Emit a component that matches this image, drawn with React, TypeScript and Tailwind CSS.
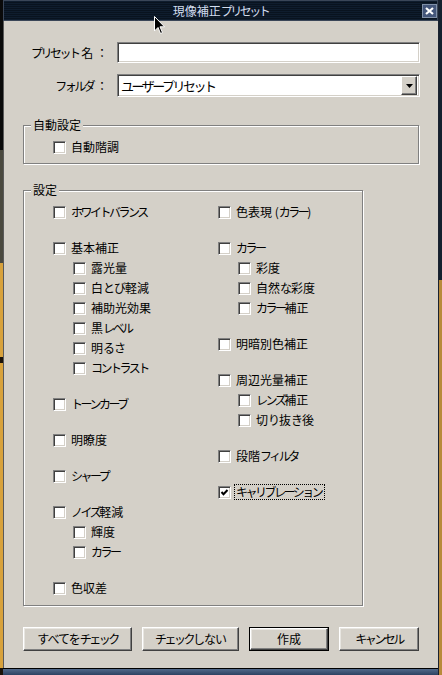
import type { ReactNode } from 'react';

type Row = { t: string; sub?: boolean; checked?: boolean; focus?: boolean };

const leftGroups: Row[][] = [
  [{ t: 'ホワイトバランス' }],
  [
    { t: '基本補正' },
    { t: '露光量', sub: true },
    { t: '白とび軽減', sub: true },
    { t: '補助光効果', sub: true },
    { t: '黒レベル', sub: true },
    { t: '明るさ', sub: true },
    { t: 'コントラスト', sub: true },
  ],
  [{ t: 'トーンカーブ' }],
  [{ t: '明瞭度' }],
  [{ t: 'シャープ' }],
  [{ t: 'ノイズ軽減' }, { t: '輝度', sub: true }, { t: 'カラー', sub: true }],
  [{ t: '色収差' }],
];

const rightGroups: Row[][] = [
  [{ t: '色表現 (カラー)' }],
  [
    { t: 'カラー' },
    { t: '彩度', sub: true },
    { t: '自然な彩度', sub: true },
    { t: 'カラー補正', sub: true },
  ],
  [{ t: '明暗別色補正' }],
  [{ t: '周辺光量補正' }, { t: 'レンズ補正', sub: true }, { t: '切り抜き後', sub: true }],
  [{ t: '段階フィルタ' }],
  [{ t: 'キャリブレーション', checked: true, focus: true }],
];

// the source UI font sets kana proportionally; narrow the kana runs to match
function Jp({ text }: { text: string }) {
  const runs = text.match(/[\u30a0-\u30ff]+|[\u3040-\u309f]+|[^\u3040-\u30ff]+/g) ?? [];
  return (
    <>
      {runs.map((r, i) => {
        if (/^[\u30a0-\u30ff]/.test(r)) {
          return (
            <span key={i} className="tracking-[-2.5px]">
              {r}
            </span>
          );
        }
        if (/^[\u3040-\u309f]/.test(r)) {
          return (
            <span key={i} className="tracking-[-1px]">
              {r}
            </span>
          );
        }
        return <span key={i}>{r}</span>;
      })}
    </>
  );
}

function CheckBox({ checked }: { checked?: boolean }) {
  return (
    <span className="flex h-[13px] w-[13px] shrink-0 items-center justify-center border border-t-[#808080] border-l-[#808080] border-r-white border-b-white bg-white shadow-[inset_1px_1px_0_#404040,inset_-1px_-1px_0_#d4d0c8]">
      {checked && (
        <svg width="9" height="9" viewBox="0 0 9 9">
          <polyline points="1.5,4 3.5,6.2 7.5,2" fill="none" stroke="#000" strokeWidth="2" />
        </svg>
      )}
    </span>
  );
}

function Item({ row }: { row: Row }) {
  return (
    <div className={`flex h-[20px] items-center gap-[5px] ${row.sub ? 'pl-[20px]' : ''}`}>
      <CheckBox checked={row.checked} />
      <span className={`leading-[14px] ${row.focus ? 'outline outline-1 outline-dotted outline-black pl-[1px] pr-[3px] -ml-[1px]' : ''}`}>
        <Jp text={row.t} />
      </span>
    </div>
  );
}

function Column({ groups, className }: { groups: Row[][]; className: string }) {
  return (
    <div className={`flex flex-col gap-[16px] ${className}`}>
      {groups.map((g, i) => (
        <div key={i} className="flex flex-col">
          {g.map((r) => (
            <Item key={r.t} row={r} />
          ))}
        </div>
      ))}
    </div>
  );
}

function GroupBox({ title, className, children }: { title: string; className: string; children: ReactNode }) {
  return (
    <div
      className={`relative border border-[#808080] shadow-[inset_1px_1px_0_#fff,1px_1px_0_#fff] ${className}`}
    >
      <span className="absolute -top-[9px] left-[7px] bg-[#d4d0c8] px-[2px] leading-[16px]">{title}</span>
      {children}
    </div>
  );
}

function Button({ children, className, primary }: { children: string; className: string; primary?: boolean }) {
  return (
    <div className={`${primary ? 'border border-black' : ''} ${className}`}>
      <div className="flex h-full items-center justify-center border border-t-white border-l-white border-r-[#404040] border-b-[#404040] bg-[#d4d0c8] shadow-[inset_-1px_-1px_0_#808080,inset_1px_1px_0_#e8e6e1]">
        <span>
          <Jp text={children} />
        </span>
      </div>
    </div>
  );
}

export default function App() {
  return (
    <div className="relative flex h-[675px] w-[442px] overflow-hidden bg-black text-[12px] text-black font-['Noto_Sans_CJK_JP','Noto_Sans',sans-serif]">
      {/* desktop behind, left edge */}
      <div className="flex w-[3px] flex-col">
        <div className="h-[150px] bg-[#0a0a0a]" />
        <div className="h-[113px] bg-[#4a493f]" />
        <div className="h-[94px] bg-[#d8a23c]" />
        <div className="h-[6px] bg-[#1a1208]" />
        <div className="flex-1 bg-[#d8a23c]" />
        <div className="h-[7px] bg-[#1a1208]" />
      </div>

      <div className="flex w-[435px] flex-col">
        {/* title bar */}
        <div className="relative flex h-[21px] items-center justify-center border border-[#3a4658] bg-[repeating-linear-gradient(180deg,#0f1d2e_0px,#0f1d2e_1px,#09131f_1px,#09131f_2px)]">
          <span className="text-[12px] leading-[14px] text-[#d2dcee]">
            <Jp text="現像補正プリセット" />
          </span>
          <div className="absolute right-[0px] top-[3px] flex h-[14px] w-[15px] items-center justify-center border border-[#8090a8] bg-[#44567a]">
            <svg width="9" height="8" viewBox="0 0 9 8">
              <path d="M1 1 L8 7 M8 1 L1 7" stroke="#fff" strokeWidth="2.2" />
            </svg>
          </div>
        </div>

        {/* body */}
        <div className="flex flex-1 flex-col border-l border-[#5a5a5a] bg-[#d4d0c8] pl-[19px]">
          <div className="mt-[21px] flex items-center">
            <span className="w-[85px] text-right">
              <Jp text="プリセット 名 ：" />
            </span>
            <div className="ml-[9px] h-[21px] w-[303px] border border-t-[#808080] border-l-[#808080] border-r-white border-b-white bg-white shadow-[inset_1px_1px_0_#404040,inset_-1px_-1px_0_#d4d0c8]" />
          </div>

          <div className="mt-[11px] flex items-center">
            <span className="w-[85px] text-right">
              <Jp text="フォルダ ：" />
            </span>
            <div className="ml-[9px] flex h-[23px] w-[303px] items-center justify-between border border-t-[#808080] border-l-[#808080] border-r-white border-b-white bg-white pl-[3px] pr-[2px] shadow-[inset_1px_1px_0_#404040,inset_-1px_-1px_0_#d4d0c8]">
              <span className="text-[13px] leading-[16px]">
                <Jp text="ユーザープリセット" />
              </span>
              <div className="flex h-[19px] w-[16px] items-center justify-center border border-t-white border-l-white border-r-[#404040] border-b-[#404040] bg-[#d4d0c8] shadow-[inset_-1px_-1px_0_#808080]">
                <svg width="7" height="4" viewBox="0 0 7 4">
                  <path d="M0 0 H7 L3.5 4 Z" fill="#000" />
                </svg>
              </div>
            </div>
          </div>

          <GroupBox title="自動設定" className="mt-[28px] w-[396px] pl-[29px] pt-[11px] pb-[6px]">
            <Item row={{ t: '自動階調' }} />
          </GroupBox>

          <GroupBox title="設定" className="mt-[26px] flex w-[340px] pl-[29px] pt-[11px] pb-[7px]">
            <Column groups={leftGroups} className="w-[165px]" />
            <Column groups={rightGroups} className="flex-1" />
          </GroupBox>

          <div className="mt-[21px] flex h-[24px] gap-[10px]">
            <Button className="w-[109px]">すべてをチェック</Button>
            <Button className="w-[97px]">チェックしない</Button>
            <Button className="w-[80px]" primary>
              作成
            </Button>
            <Button className="w-[80px]">キャンセル</Button>
          </div>
        </div>

        {/* bottom frame */}
        <div className="h-[7px] border-t border-black bg-[linear-gradient(180deg,#52698a,#2d4262)]" />
      </div>

      {/* right edge */}
      <div className="flex w-[4px] flex-col border-l border-[#1a2230]">
        <div className="h-[280px] bg-[#14202e]" />
        <div className="flex-1 bg-[#b88a3a]" />
      </div>

      {/* mouse pointer */}
      <svg className="absolute left-[154px] top-[16px]" width="12" height="19" viewBox="0 0 12 19">
        <path d="M0.5 0.5 L0.5 15 L4 11.5 L6.5 17.5 L8.5 16.6 L6 10.8 L10.5 10.8 Z" fill="#000" stroke="#fff" strokeWidth="1" />
      </svg>
    </div>
  );
}
